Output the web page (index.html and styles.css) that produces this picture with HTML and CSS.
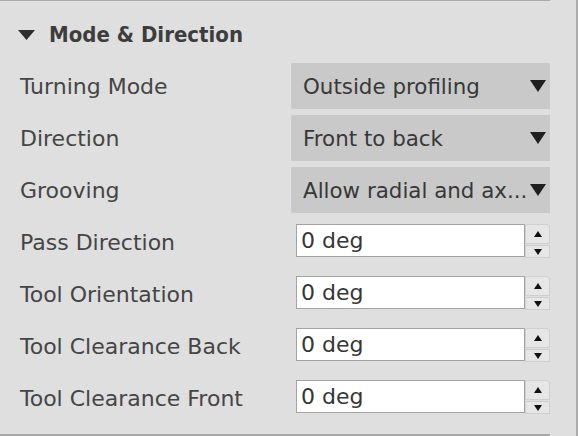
FILE: index.html
```html
<!DOCTYPE html>
<html>
<head>
<meta charset="utf-8">
<link rel="stylesheet" href="styles.css">
</head>
<body>
<div class="frame">
  <div class="panel">
    <div class="section-head">
      <svg class="disclosure" width="17" height="10" viewBox="0 0 17 10"><polygon points="0,0 17,0 8.5,10" fill="#2e2e2e"/></svg>
      <span class="section-title">Mode &amp; Direction</span>
    </div>
    <div class="rows">
      <div class="row">
        <span class="label">Turning Mode</span>
        <div class="select"><span class="select-text">Outside profiling</span><svg class="select-arrow" width="16" height="12" viewBox="0 0 16 12"><polygon points="0,0 16,0 8,12" fill="#1f1f1f"/></svg></div>
      </div>
      <div class="row">
        <span class="label">Direction</span>
        <div class="select"><span class="select-text">Front to back</span><svg class="select-arrow" width="16" height="12" viewBox="0 0 16 12"><polygon points="0,0 16,0 8,12" fill="#1f1f1f"/></svg></div>
      </div>
      <div class="row">
        <span class="label">Grooving</span>
        <div class="select"><span class="select-text">Allow radial and ax...</span><svg class="select-arrow" width="16" height="12" viewBox="0 0 16 12"><polygon points="0,0 16,0 8,12" fill="#1f1f1f"/></svg></div>
      </div>
      <div class="row">
        <span class="label">Pass Direction</span>
        <div class="spin"><div class="spin-input">0 deg</div><div class="spin-buttons"><div class="spin-btn up"><svg width="8" height="6" viewBox="0 0 8 6"><polygon points="4,0 8,6 0,6" fill="#111"/></svg></div><div class="spin-btn down"><svg width="8" height="6" viewBox="0 0 8 6"><polygon points="0,0 8,0 4,6" fill="#111"/></svg></div></div></div>
      </div>
      <div class="row">
        <span class="label">Tool Orientation</span>
        <div class="spin"><div class="spin-input">0 deg</div><div class="spin-buttons"><div class="spin-btn up"><svg width="8" height="6" viewBox="0 0 8 6"><polygon points="4,0 8,6 0,6" fill="#111"/></svg></div><div class="spin-btn down"><svg width="8" height="6" viewBox="0 0 8 6"><polygon points="0,0 8,0 4,6" fill="#111"/></svg></div></div></div>
      </div>
      <div class="row">
        <span class="label">Tool Clearance Back</span>
        <div class="spin"><div class="spin-input">0 deg</div><div class="spin-buttons"><div class="spin-btn up"><svg width="8" height="6" viewBox="0 0 8 6"><polygon points="4,0 8,6 0,6" fill="#111"/></svg></div><div class="spin-btn down"><svg width="8" height="6" viewBox="0 0 8 6"><polygon points="0,0 8,0 4,6" fill="#111"/></svg></div></div></div>
      </div>
      <div class="row">
        <span class="label">Tool Clearance Front</span>
        <div class="spin"><div class="spin-input">0 deg</div><div class="spin-buttons"><div class="spin-btn up"><svg width="8" height="6" viewBox="0 0 8 6"><polygon points="4,0 8,6 0,6" fill="#111"/></svg></div><div class="spin-btn down"><svg width="8" height="6" viewBox="0 0 8 6"><polygon points="0,0 8,0 4,6" fill="#111"/></svg></div></div></div>
      </div>
    </div>
  </div>
  <div class="gutter"></div>
  <div class="edge"></div>
</div>
</body>
</html>
```

FILE: styles.css
```css
html, body {
  margin: 0;
  padding: 0;
  background: #dfdfdf;
}
body {
  font-family: "DejaVu Sans", "Liberation Sans", sans-serif;
  color: #444444;
}
.frame {
  display: flex;
  width: 578px;
  height: 436px;
}
.panel {
  width: 550px;
  height: 436px;
  box-sizing: border-box;
  border-top: 1px solid #a9a9a9;
  border-bottom: 2px solid #a9a9a9;
  display: flex;
  flex-direction: column;
}
.gutter {
  flex: 1;
}
.edge {
  width: 2px;
  background: #acacac;
}
.section-head {
  height: 62px;
  display: flex;
  align-items: center;
  padding-left: 18px;
  box-sizing: border-box;
  padding-top: 4px;
}
.disclosure {
  display: block;
  margin-right: 14px;
  margin-top: 1px;
}
.section-title {
  font-family: "DejaVu Sans Condensed", "DejaVu Sans", sans-serif;
  font-weight: bold;
  font-size: 22px;
  color: #3d3d3d;
}
.rows {
  display: flex;
  flex-direction: column;
  gap: 6px;
}
.row {
  height: 46px;
  display: grid;
  grid-template-columns: 291px 259px;
  align-items: center;
}
.label {
  padding-left: 20px;
  font-size: 22px;
  color: #454545;
  white-space: nowrap;
}
.select {
  height: 46px;
  background: #c9c9c9;
  display: flex;
  align-items: center;
  justify-content: space-between;
  padding-left: 12px;
  padding-right: 4px;
  box-sizing: border-box;
  border-radius: 1px;
}
.select-text {
  font-size: 21.4px;
  color: #383838;
  white-space: nowrap;
  min-width: 0;
  flex: 0 1 auto;
}
.select-arrow {
  display: block;
  flex: none;
}
.spin {
  display: flex;
  margin-left: 5px;
  height: 34px;
  align-self: start;
  margin-top: 5px;
}
.spin-input {
  width: 229px;
  height: 33px;
  box-sizing: border-box;
  background: #ffffff;
  border: 1px solid #a3a3a3;
  font-size: 22px;
  color: #363636;
  padding-left: 4px;
  line-height: 31px;
}
.spin-buttons {
  width: 25px;
  display: flex;
  flex-direction: column;
  gap: 1px;
}
.spin-btn {
  display: flex;
  align-items: center;
  justify-content: center;
  background: #e6e6e6;
  border: 1px solid #cfcfcf;
  box-sizing: border-box;
}
.spin-btn.up {
  height: 20px;
  border-top-right-radius: 3px;
}
.spin-btn.down {
  height: 13px;
  border-top: 1px solid #cfcfcf;
}
```
